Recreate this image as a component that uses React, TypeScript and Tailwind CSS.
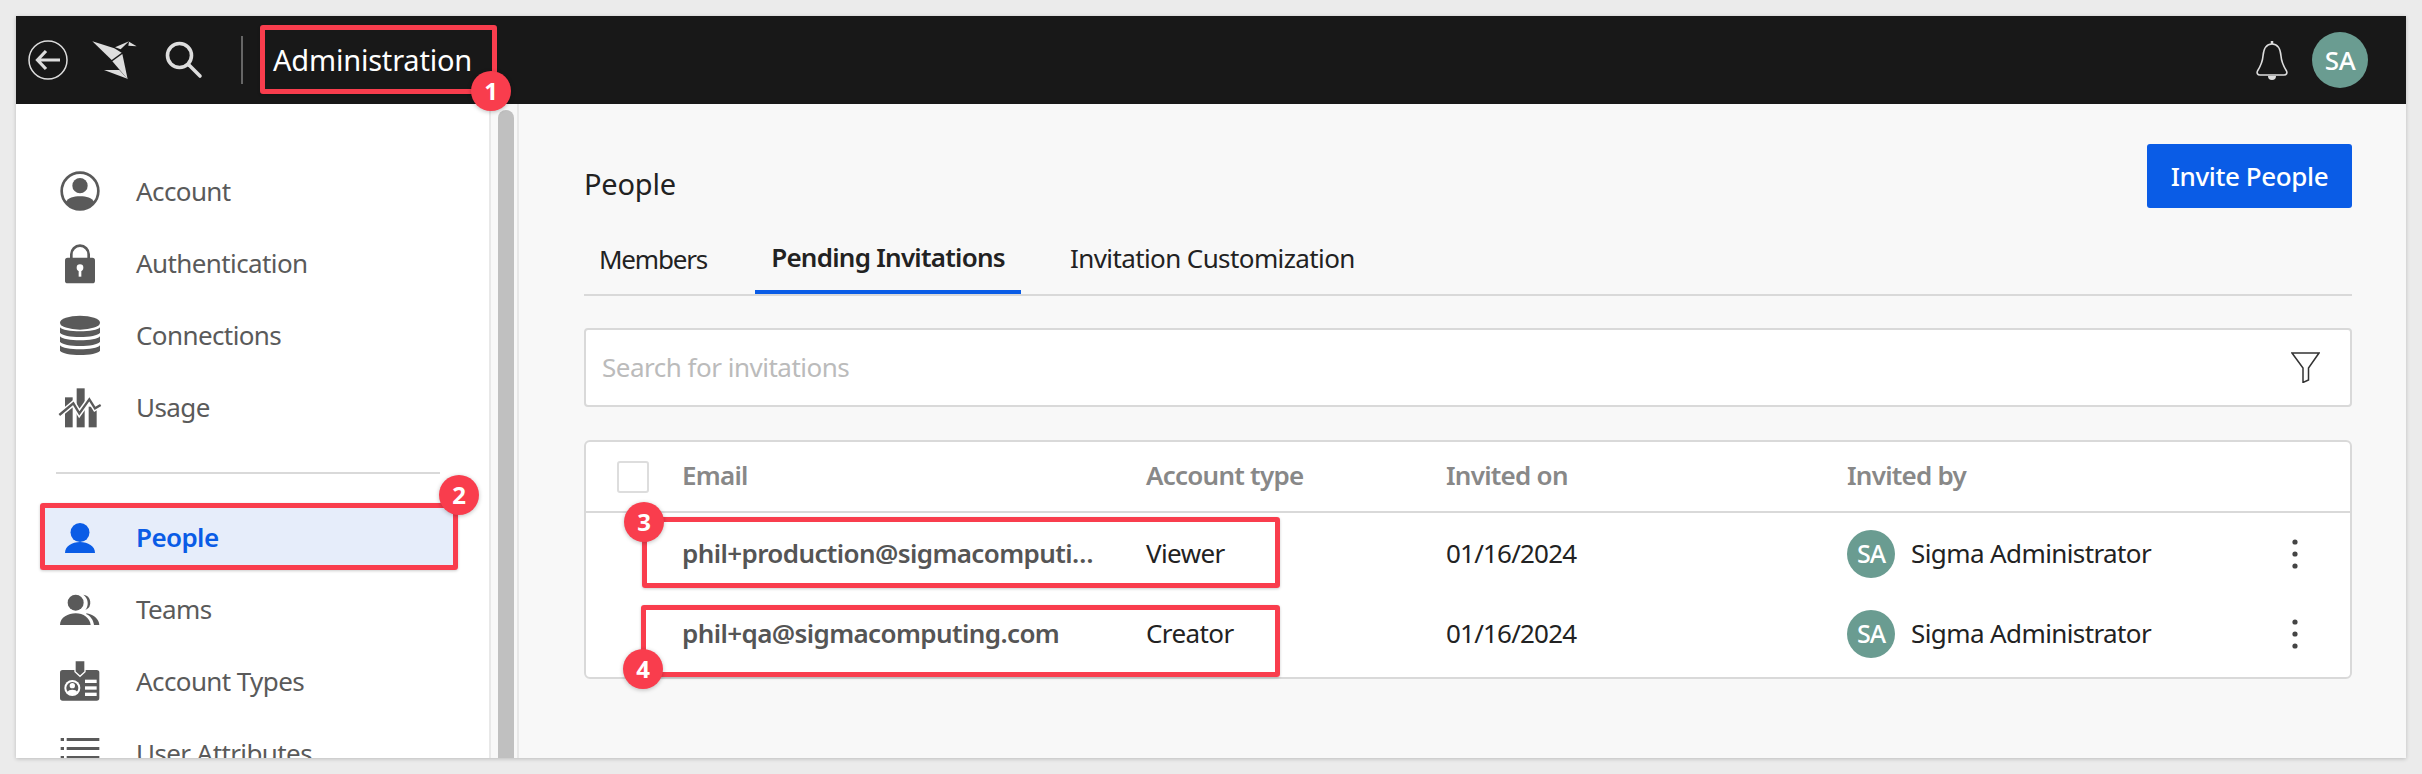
import React from "react";

const sideItems = [
  { label: "Account", icon: "account" },
  { label: "Authentication", icon: "lock" },
  { label: "Connections", icon: "db" },
  { label: "Usage", icon: "usage" },
];

const sideItems2 = [
  { label: "Teams", icon: "teams" },
  { label: "Account Types", icon: "card" },
  { label: "User Attributes", icon: "list" },
];

const rows = [
  { email: "phil+production@sigmacomputing.com", type: "Viewer", date: "01/16/2024" },
  { email: "phil+qa@sigmacomputing.com", type: "Creator", date: "01/16/2024" },
];

const SideIcon = ({ name }: { name: string }) => {
  const boxes: any = {
    account: "21 12 138 138",
    lock: "21 228 138 138",
    db: "21 9 138 138",
    usage: "21 225 138 138",
    teams: "21 -9 138 138",
    card: "21 210 138 138",
    list: "21 426 138 138",
  };
  return (
    <svg viewBox={boxes[name]} className="w-[46px] h-[46px] shrink-0" fill="#5a5a5a">
      {name === "account" && (
        <>
          <circle cx="90" cy="78" r="55" fill="none" stroke="#5a5a5a" strokeWidth="8" />
          <circle cx="90" cy="62" r="23" />
          <path d="M47 112C55 98 70 94 90 94C110 94 125 98 133 112A55 55 0 0 1 47 112Z" />
        </>
      )}
      {name === "lock" && (
        <>
          <path d="M64 282V268A26 26 0 0 1 116 268V282" fill="none" stroke="#5a5a5a" strokeWidth="8" />
          <rect x="45" y="278" width="90" height="77" rx="8" />
          <circle cx="90" cy="308" r="10" fill="#fff" />
          <rect x="86" y="308" width="8" height="27" fill="#fff" />
        </>
      )}
      {name === "db" && (
        <>
          <ellipse cx="90" cy="38" rx="60" ry="21" />
          <path d="M30 52C40 68 140 68 150 52V68C140 85 40 85 30 68Z" />
          <path d="M30 79C40 95 140 95 150 79V95C140 112 40 112 30 95Z" />
          <path d="M30 106C40 122 140 122 150 106V122C140 139 40 139 30 122Z" />
        </>
      )}
      {name === "usage" && (
        <>
          <rect x="45" y="262" width="23" height="90" />
          <rect x="80" y="235" width="24" height="117" />
          <rect x="116" y="290" width="24" height="62" />
          <polyline points="28,315 70,280 88,310 118,268 135,295 152,285" fill="none" stroke="#fff" strokeWidth="16" />
          <polyline points="28,315 70,280 88,310 118,268 135,295 152,285" fill="none" stroke="#5a5a5a" strokeWidth="7" />
        </>
      )}
      {name === "teams" && (
        <>
          <circle cx="77" cy="38" r="24" />
          <path d="M100 14A24 24 0 0 1 106 60A32 32 0 0 0 100 14Z" />
          <path d="M30 105C30 82 55 70 77 70C100 70 120 84 122 105Z" />
          <path d="M110 70C134 74 148 90 148 105H132C130 90 122 78 108 72Z" />
        </>
      )}
      {name === "card" && (
        <>
          <rect x="30" y="243" width="118" height="92" rx="8" />
          <path d="M75 215H105V248L90 262L75 248Z" stroke="#fff" strokeWidth="4" />
          <circle cx="67" cy="297" r="24" fill="#fff" />
          <circle cx="67" cy="297" r="18" fill="#5a5a5a" />
          <circle cx="67" cy="290" r="8" fill="#fff" />
          <path d="M52 310C55 300 79 300 82 310A18 18 0 0 1 52 310Z" fill="#fff" />
          <rect x="105" y="272" width="35" height="10" fill="#fff" />
          <rect x="105" y="292" width="35" height="10" fill="#fff" />
          <rect x="105" y="311" width="35" height="10" fill="#fff" />
        </>
      )}
      {name === "list" && (
        <>
          <rect x="32" y="447" width="10" height="9" />
          <rect x="50" y="447" width="98" height="9" />
          <rect x="32" y="474" width="10" height="9" />
          <rect x="50" y="474" width="98" height="9" />
          <rect x="32" y="501" width="10" height="9" />
          <rect x="50" y="501" width="98" height="9" />
        </>
      )}
    </svg>
  );
};

const SideRow = ({ item }: any) => (
  <div className="flex items-center h-[72px] pl-[41px] gap-[33px] text-[26px] tracking-[-0.6px] text-[#5a5a5a]">
    <SideIcon name={item.icon} />
    <span className="pb-px">{item.label}</span>
  </div>
);

const Avatar = ({ size }: { size: string }) => (
  <div
    className={`${size} rounded-full bg-[#6a9c91] text-white font-medium flex items-center justify-center shrink-0`}
  >
    SA
  </div>
);

const Badge = ({ n, className }: { n: number; className: string }) => (
  <div
    className={`absolute w-10 h-10 rounded-full bg-[#f93d4d] text-white font-bold text-[24px] flex items-center justify-center shadow-[0_1px_4px_rgba(0,0,0,0.25)] ${className}`}
  >
    {n}
  </div>
);

const Mark = ({ className }: { className: string }) => (
  <div
    className={`absolute border-[5px] border-[#f93d4d] rounded-[3px] shadow-[0_1px_3px_rgba(0,0,0,0.2)] ${className}`}
  />
);

export default function App() {
  return (
    <div className="relative w-[2422px] h-[774px] p-4 bg-[#ebebeb] overflow-hidden font-['Noto_Sans',sans-serif]">
      <div className="flex flex-col h-full shadow-[0_1px_4px_rgba(0,0,0,0.2)]">
        {/* top bar */}
        <div className="flex items-center h-[88px] shrink-0 bg-[#181818] pl-[12px] pr-[38px]">
          <svg viewBox="0 0 40 40" className="w-10 h-10 shrink-0" fill="none" stroke="#ddd">
            <circle cx="20" cy="20" r="19" strokeWidth="1.5" />
            <path d="M32 20H10M18 11L9.5 20L18 29" strokeWidth="3.2" />
          </svg>
          <svg viewBox="210 30 150 120" className="w-[50px] h-10 ml-[22px] shrink-0" fill="#ddd">
            <polygon points="217,34 283,55 305,68 275,90" />
            <polygon points="285,52 327,34 302,58" />
            <polygon points="327,35 350,49 325,47" />
            <polygon points="277,94 307,72 323,148" />
            <polygon points="252,120 298,120 322,146" />
          </svg>
          <svg viewBox="0 0 40 40" className="w-10 h-10 ml-[24px] shrink-0" fill="none" stroke="#ddd" strokeWidth="3.6">
            <circle cx="15.5" cy="15.5" r="12" />
            <path d="M25 25L36 36" strokeLinecap="round" />
          </svg>
          <div className="w-[2px] h-12 ml-[37px] bg-[#666] shrink-0" />
          <div className="ml-[30px] text-[29px] tracking-[-0.2px] text-white">Administration</div>
          <div className="flex-1" />
          <svg viewBox="0 0 34 40" className="w-[34px] h-10 shrink-0" fill="none" stroke="#ddd" strokeWidth="1.6">
            <path d="M17 4C10 4 8.5 10 8 16C7.5 23 5 27 2.5 31C1.5 33 2.5 35 5 35H29C31.5 35 32.5 33 31.5 31C29 27 26.5 23 26 16C25.5 10 24 4 17 4Z" />
            <path d="M17 4V1" strokeWidth="2.5" />
            <path d="M13 36A4 4 0 0 0 21 36Z" fill="#ddd" stroke="none" />
          </svg>
          <div className="ml-[23px]">
            <Avatar size="w-14 h-14 text-[26px] tracking-[-0.5px]" />
          </div>
        </div>

        <div className="flex flex-1 min-h-0">
          {/* sidebar */}
          <div className="w-[475px] shrink-0 bg-white border-r-2 border-[#e8e8e8] pt-[52px] overflow-hidden">
            {sideItems.map((item) => (
              <SideRow key={item.label} item={item} />
            ))}
            <div className="h-[2px] ml-[40px] mr-[49px] my-[28px] bg-[#d9d9d9]" />
            <div className="flex items-center h-[72px] pl-[41px]">
              <div className="flex items-center w-full mr-[32px] -ml-[17px] pl-[17px] h-[64px] gap-[33px] bg-[#e6edfa] text-[26px] tracking-[-0.6px] font-semibold text-[#0a5ce6]">
                <svg viewBox="0 0 46 46" className="w-[46px] h-[46px] shrink-0" fill="#0a5ce6">
                  <circle cx="23" cy="17.5" r="9.5" />
                  <path d="M8 38C8 31 15 27 23 27C31 27 38 31 38 38Z" />
                </svg>
                <span className="pb-px">People</span>
              </div>
            </div>
            {sideItems2.map((item) => (
              <SideRow key={item.label} item={item} />
            ))}
          </div>

          {/* scroll gutter */}
          <div className="w-[28px] shrink-0 bg-[#f8f8f8] border-r-2 border-[#e8e8e8] pl-[7px] pt-[6px]">
            <div className="w-4 h-full rounded-t-full bg-[#c0c0c0]" />
          </div>

          {/* main */}
          <div className="flex-1 bg-[#f8f8f8] pl-[65px] pr-[54px] pt-10">
            <div className="flex justify-between items-start h-[64px]">
              <div className="mt-[22px] text-[29px] tracking-[-0.2px] leading-9 text-[#222]">People</div>
              <div className="w-[205px] h-16 rounded-[3px] bg-[#0a5ce6] text-white text-[26px] tracking-[-0.4px] font-medium flex items-center justify-center">
                Invite People
              </div>
            </div>

            <div className="flex gap-[33px] mt-[28px] border-b-2 border-[#d9d9d9] text-[26px] tracking-[-0.6px] text-[#222]">
              <div className="w-[138px] h-[58px] pb-3 flex items-center justify-center tracking-[-1.2px]">Members</div>
              <div className="w-[266px] h-[58px] pb-3 flex items-center justify-center font-semibold tracking-[-0.75px] border-b-4 border-[#0a5ce6]">
                Pending Invitations
              </div>
              <div className="h-[58px] px-4 pb-3.5 flex items-center">Invitation Customization</div>
            </div>

            <div className="flex items-center justify-between h-[79px] mt-[32px] pl-4 pr-[30px] bg-white border-2 border-[#d9d9d9] rounded-[4px]">
              <span className="text-[26px] tracking-[-0.5px] text-[#bbb]">Search for invitations</span>
              <svg viewBox="0 0 29 31" className="w-[29px] h-[31px]" fill="none" stroke="#333" strokeWidth="1.5">
                <path d="M1 1H28L17.5 16V28L12 30.5V16Z" />
              </svg>
            </div>

            <div className="h-[239px] mt-[33px] bg-white border-2 border-[#d9d9d9] rounded-[6px] text-[26px] tracking-[-0.6px]">
              <div className="grid grid-cols-[96px_464px_300px_401px_424px_47px] items-center h-[71px] border-b-2 border-[#d9d9d9] font-semibold text-[#888] tracking-[-0.75px]">
                <div className="pl-[31px]">
                  <div className="w-[32px] h-[32px] bg-white border-2 border-[#ddd] rounded-[3px]" />
                </div>
                <div className="pb-[2px]">Email</div>
                <div className="pb-[2px]">Account type</div>
                <div className="pb-[2px]">Invited on</div>
                <div className="pb-[2px]">Invited by</div>
                <div />
              </div>
              <div className="pt-px">
                {rows.map((row) => (
                  <div
                    key={row.email}
                    className="grid grid-cols-[96px_464px_300px_401px_424px_47px] items-center h-20 text-[#222]"
                  >
                    <div />
                    <div className="truncate pr-[47px] pb-[2px] font-semibold text-[#555]">{row.email}</div>
                    <div className="pb-[2px]">{row.type}</div>
                    <div className="pb-[2px] tracking-[-0.8px]">{row.date}</div>
                    <div className="flex items-center gap-4">
                      <Avatar size="w-12 h-12 text-[25px] tracking-[-1px]" />
                      <span className="pb-[2px]">Sigma Administrator</span>
                    </div>
                    <div className="flex justify-center">
                      <svg viewBox="0 0 8 32" className="w-2 h-8" fill="#444">
                        <circle cx="4" cy="4" r="2.6" />
                        <circle cx="4" cy="16" r="2.6" />
                        <circle cx="4" cy="28" r="2.6" />
                      </svg>
                    </div>
                  </div>
                ))}
              </div>
            </div>
          </div>
        </div>
      </div>

      {/* annotations */}
      <Mark className="left-[260px] top-[25px] w-[237px] h-[69px]" />
      <Mark className="left-[40px] top-[503px] w-[418px] h-[67px]" />
      <Mark className="left-[642px] top-[517px] w-[638px] h-[71px]" />
      <Mark className="left-[641px] top-[605px] w-[639px] h-[72px]" />
      <Badge n={1} className="left-[471px] top-[71px]" />
      <Badge n={2} className="left-[439px] top-[475px]" />
      <Badge n={3} className="left-[624px] top-[502px]" />
      <Badge n={4} className="left-[623px] top-[649px]" />
    </div>
  );
}
